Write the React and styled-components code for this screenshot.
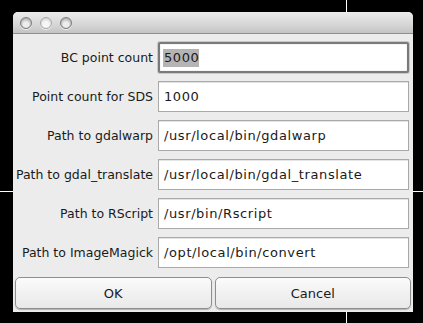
import React from 'react';
import styled, { createGlobalStyle } from 'styled-components';

const GlobalStyle = createGlobalStyle`
  html, body {
    margin: 0;
    padding: 0;
    background: #000;
  }
  body {
    font-family: "DejaVu Sans", "Liberation Sans", sans-serif;
  }
`;

const Desktop = styled.div`
  width: 423px;
  height: 323px;
  box-sizing: border-box;
  padding: 12px 10px 0 13px;
  background-color: #000;
  background-image:
    linear-gradient(#fff, #fff),
    linear-gradient(#fff, #fff);
  background-repeat: no-repeat;
  background-size: 1px 323px, 423px 1px;
  background-position: 346px 0, 0 191px;
  overflow: hidden;
`;

const Window = styled.div`
  width: 400px;
  height: 300px;
  background: #ececec;
  border-radius: 5px 5px 0 0;
  display: flex;
  flex-direction: column;
  overflow: hidden;
`;

const TitleBar = styled.div`
  height: 21px;
  flex: none;
  display: flex;
  align-items: center;
  gap: 8px;
  padding-left: 7px;
  background: linear-gradient(#ececec, #d6d6d6 60%, #c4c4c4);
  border-bottom: 1px solid #8f8f8f;
`;

const Light = styled.span`
  width: 12px;
  height: 12px;
  border-radius: 50%;
  box-sizing: border-box;
  border: 1px solid ${p => (p.$dim ? '#a8a8a8' : '#7c7c7c')};
  background: ${p =>
    p.$dim
      ? 'radial-gradient(circle at 50% 65%, #f6f6f6 0 35%, #d2d2d2 80%, #b8b8b8)'
      : 'radial-gradient(circle at 50% 65%, #eeeeee 0 30%, #b4b4b4 72%, #8a8a8a)'};
  box-shadow: 0 1px 0 rgba(255, 255, 255, 0.7);
`;

const Form = styled.div`
  display: grid;
  grid-template-columns: 136px 1fr;
  column-gap: 5px;
  row-gap: 8px;
  padding: 8px 4px 0 4px;
`;

const Label = styled.label`
  display: flex;
  align-items: center;
  justify-content: flex-end;
  white-space: nowrap;
  font-size: 12.5px;
  color: #1a1a1a;
`;

const Field = styled.div`
  height: 31px;
  box-sizing: border-box;
  display: flex;
  align-items: center;
  padding-left: ${p => (p.$focused ? '3px' : '5px')};
  background: #fff;
  border: ${p => (p.$focused ? '2px solid #7a7a7a' : '1px solid #a9a9a9')};
  border-radius: ${p => (p.$focused ? '2px' : '0')};
  box-shadow: ${p => (p.$focused ? '0 0 0 1px #c9c9c9, inset 0 0 1px #999' : 'inset 0 1px 0 #e4e4e4')};
  font-size: 13px;
  letter-spacing: 0.6px;
  color: #1a1a1a;
  white-space: nowrap;
  overflow: hidden;
`;

const Selected = styled.span`
  background: #b4b4b4;
  padding: 1px 0 2px 1px;
`;

const Buttons = styled.div`
  display: flex;
  gap: 3px;
  padding: 9px 2px 0 2px;
`;

const Button = styled.button`
  flex: 1;
  height: 32px;
  border: 1px solid #8e8e8e;
  border-radius: 5px;
  background: linear-gradient(#fbfbfb, #f1f1f1 50%, #e9e9e9);
  box-shadow: 0 1px 1px rgba(0, 0, 0, 0.25);
  font-family: "DejaVu Sans", "Liberation Sans", sans-serif;
  font-size: 13px;
  color: #1a1a1a;
  padding: 0;
`;

const rows = [
  { label: 'BC point count', value: '5000', focused: true },
  { label: 'Point count for SDS', value: '1000' },
  { label: 'Path to gdalwarp', value: '/usr/local/bin/gdalwarp' },
  { label: 'Path to gdal_translate', value: '/usr/local/bin/gdal_translate' },
  { label: 'Path to RScript', value: '/usr/bin/Rscript' },
  { label: 'Path to ImageMagick', value: '/opt/local/bin/convert' },
];

export default function App() {
  return (
    <Desktop>
      <GlobalStyle />
      <Window>
        <TitleBar>
          <Light />
          <Light $dim />
          <Light />
        </TitleBar>
        <Form>
          {rows.map(r => (
            <React.Fragment key={r.label}>
              <Label>{r.label}</Label>
              <Field $focused={r.focused}>
                {r.focused ? <Selected>{r.value}</Selected> : r.value}
              </Field>
            </React.Fragment>
          ))}
        </Form>
        <Buttons>
          <Button>OK</Button>
          <Button>Cancel</Button>
        </Buttons>
      </Window>
    </Desktop>
  );
}
